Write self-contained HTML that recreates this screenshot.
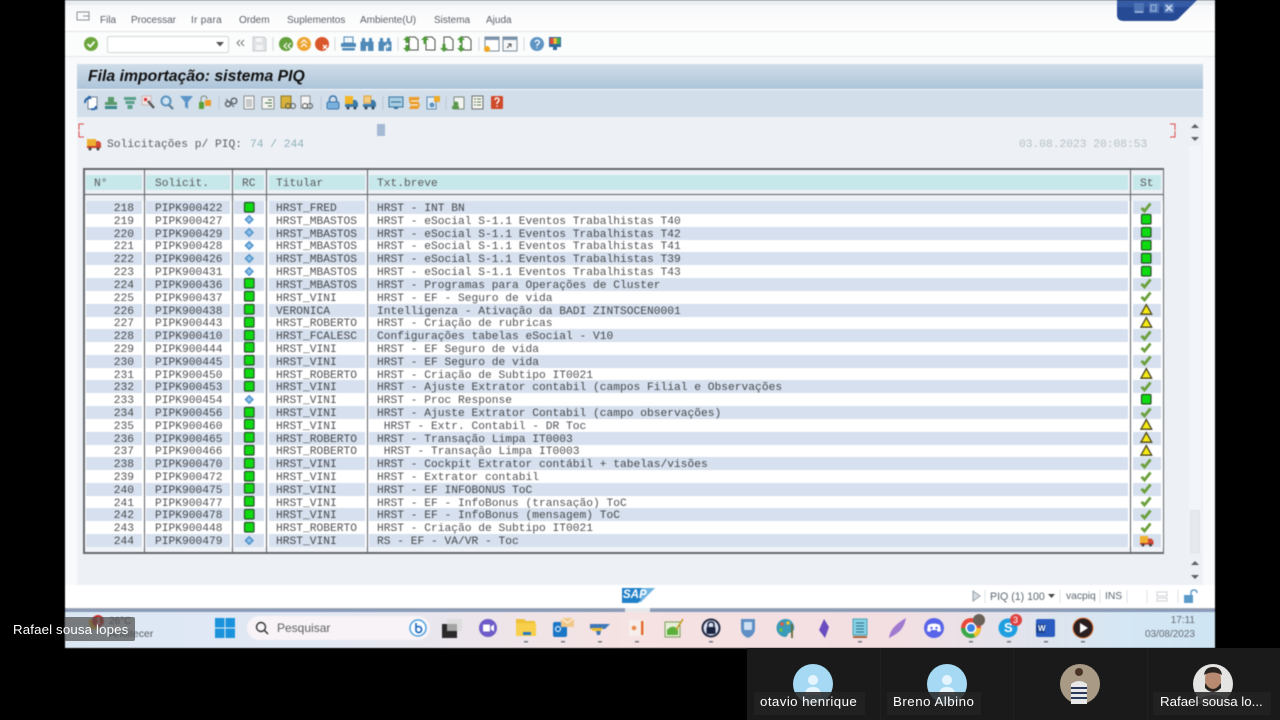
<!DOCTYPE html>
<html lang="pt"><head><meta charset="utf-8"><title>Fila importação</title>
<style>
*{box-sizing:border-box;margin:0;padding:0}
html,body{width:1280px;height:720px;overflow:hidden;background:#000}
body{font-family:"Liberation Sans",sans-serif;position:relative}
.a,.a>*{position:absolute}
#s{left:65px;top:0;width:1150px;height:648px;background:#fff;overflow:hidden}
.m{top:15px;font-size:10px;color:#5a5f66;line-height:12px;white-space:nowrap}
.mono{font-family:"Liberation Mono",monospace;font-size:11.25px;line-height:13px;white-space:pre}
.r{position:absolute;left:0;width:1280px;height:13px}
.r span{position:absolute;top:0;height:13px;font-family:"Liberation Mono",monospace;font-size:11.25px;line-height:16.5px;color:#505256;white-space:pre}
.r span:nth-child(1){left:86px;width:56px;text-align:right;padding-right:8px}
.r span:nth-child(2){left:146px;width:84px;padding-left:9px}
.r span:nth-child(3){left:234px;width:30px}
.r span:nth-child(4){left:269px;width:96px;padding-left:7px}
.r span:nth-child(5){left:369px;width:759px;padding-left:8px}
.r span:nth-child(6){left:1133px;width:28px}
.o span{background:#d6e0ee;color:#46484c}
.r svg{position:absolute;left:0;top:-.5px;width:100%;height:13px}
.h{position:absolute;top:175px;height:15px;background:#c7e8ea;font-family:"Liberation Mono",monospace;font-size:11.25px;line-height:18px;color:#55595c;white-space:pre}
.v{position:absolute;top:168px;height:385px;width:1px;background:#5c6066}
.n{position:absolute;font-size:13.3px;color:#fff;line-height:18px;white-space:nowrap;letter-spacing:.35px}
.l{position:absolute;top:692px;height:23px;background:#232323}
</style></head>
<body>
<svg width="0" height="0" style="position:absolute"><defs>
<symbol id="g" viewBox="0 0 30 13"><rect x="10.5" y="1.5" width="9.5" height="9.5" rx="1" fill="#0fdc10" stroke="#27502c" stroke-width="1.2"/></symbol>
<symbol id="d" viewBox="0 0 30 13"><path d="M15.2 2.7l3.8 3.8-3.8 3.8-3.8-3.8z" fill="#8cc0ea" stroke="#4b8fc8" stroke-width="1.4"/></symbol>
<symbol id="G" viewBox="0 0 28 13"><rect x="8.500" y="1.5" width="9.500" height="9.500" rx="1" fill="#0fdc10" stroke="#27502c" stroke-width="1.2"/></symbol>
<symbol id="c" viewBox="0 0 28 13"><path d="M8.500 6.800l3 3.200 6-7.500" fill="none" stroke="#6a9f3c" stroke-width="2.800"/></symbol>
<symbol id="w" viewBox="0 0 28 13"><path d="M13.300 1.600l5.400 9.600H7.900z" fill="#f6ea14" stroke="#4a4520" stroke-width="1.300"/></symbol>
<symbol id="t" viewBox="0 0 28 13"><rect x="7" y="2" width="8" height="7.500" fill="#f0b030"/><path d="M15 4.500h3.500l2 2.500v3H15z" fill="#d24a3a"/><rect x="7" y="9" width="13.500" height="1.600" fill="#c8402e"/><circle cx="10" cy="11" r="1.500" fill="#444"/><circle cx="17.500" cy="11" r="1.500" fill="#444"/></symbol>
</defs></svg>

<div id="w" class="a" style="left:0;top:0;width:1280px;height:720px;filter:blur(.4px)">
<div id="s"></div>
<div style="left:65px;top:0;width:1150px;height:5px;background:#e9edf2"></div>
<div style="left:65px;top:5px;width:1150px;height:27px;background:linear-gradient(#f7f8fa,#fff)"></div>
<div style="left:65px;top:31px;width:1150px;height:1px;background:#dfe3e7"></div>
<div style="left:65px;top:32px;width:1150px;height:25px;background:#fbfcfc"></div>
<div style="left:65px;top:56px;width:1150px;height:1px;background:#e4e8ec"></div>
<div style="left:65px;top:57px;width:1150px;height:528px;background:#f8f9fb"></div>
<div style="left:77px;top:64px;width:1126px;height:25px;background:linear-gradient(#d0dde9,#adc4da)"></div>
<div style="left:77px;top:90px;width:1126px;height:27px;background:#d2deea"></div>
<div style="left:77px;top:117px;width:1126px;height:468px;background:#edf1f6"></div>
<div style="left:65px;top:585px;width:1150px;height:23px;background:#fff"></div>
<div style="left:65px;top:608px;width:1150px;height:1px;background:#a6acb5"></div>
<div style="left:65px;top:609px;width:1150px;height:3px;background:#8a9bb9"></div>
<div style="left:65px;top:612px;width:1150px;height:36px;background:linear-gradient(90deg,#dbe8f4 0,#e3e9f4 22%,#f6e2e2 50%,#f3dfe2 72%,#d5e7f4 92%,#cfe5f4 100%)"></div>

<span class="m" style="left:100px">Fila</span>
<span class="m" style="left:131px">Processar</span>
<span class="m" style="left:191px;letter-spacing:.3px">Ir para</span>
<span class="m" style="left:239px">Ordem</span>
<span class="m" style="left:287px">Suplementos</span>
<span class="m" style="left:360px">Ambiente(U)</span>
<span class="m" style="left:434px">Sistema</span>
<span class="m" style="left:486px">Ajuda</span>

<div style="left:107px;top:36px;width:122px;height:17px;background:#fff;border:1px solid #d2d5d8;border-radius:2px"></div>
<span style="left:88px;top:68px;font:italic bold 15.8px/18px 'Liberation Sans',sans-serif;color:#111;white-space:nowrap">Fila importação: sistema PIQ</span>
<span class="mono" style="left:107px;top:137px;color:#5a5e62;line-height:16px">Solicitações p/ PIQ:</span>
<span class="mono" style="left:250px;top:137px;color:#8fb0ba;line-height:16px">74 / 244</span>
<span class="mono" style="left:1019px;top:137px;color:#b4bec4;line-height:16px">03.08.2023 20:08:53</span>
<div style="left:377px;top:124px;width:8px;height:12px;background:#a5b9d4"></div>

<!-- table frame -->
<div style="left:83px;top:168px;width:1081px;height:386px;background:#fff;border:1px solid #666a6e;border-width:2px 1px 2px 2px"></div>
<div style="left:85px;top:170px;width:1078px;height:24px;background:#edf1f6"></div>
<div style="left:85px;top:194px;width:1078px;height:1px;background:#5c6066"></div>
<div style="left:85px;top:195px;width:1078px;height:6px;background:#eef2f7"></div>
<div style="left:85px;top:547px;width:1078px;height:5px;background:#f0f3f8"></div>
<div class="v" style="left:144px"></div><div class="v" style="left:232px"></div><div class="v" style="left:266px"></div><div class="v" style="left:367px"></div><div class="v" style="left:1130px"></div>
<div class="h" style="left:86px;width:56px;padding-left:8px">N°</div>
<div class="h" style="left:146px;width:84px;padding-left:9px">Solicit.</div>
<div class="h" style="left:234px;width:30px;padding-left:8px">RC</div>
<div class="h" style="left:269px;width:96px;padding-left:7px">Titular</div>
<div class="h" style="left:369px;width:759px;padding-left:8px">Txt.breve</div>
<div class="h" style="left:1133px;width:28px;padding-left:7px">St</div>

<div class="r o" style="top:201px"><span>218</span><span>PIPK900422</span><span><svg><use href="#g"/></svg></span><span>HRST_FRED</span><span>HRST - INT BN</span><span><svg><use href="#c"/></svg></span></div>
<div class="r" style="top:213.8px"><span>219</span><span>PIPK900427</span><span><svg><use href="#d"/></svg></span><span>HRST_MBASTOS</span><span>HRST - eSocial S-1.1 Eventos Trabalhistas T40</span><span><svg><use href="#G"/></svg></span></div>
<div class="r o" style="top:226.6px"><span>220</span><span>PIPK900429</span><span><svg><use href="#d"/></svg></span><span>HRST_MBASTOS</span><span>HRST - eSocial S-1.1 Eventos Trabalhistas T42</span><span><svg><use href="#G"/></svg></span></div>
<div class="r" style="top:239.4px"><span>221</span><span>PIPK900428</span><span><svg><use href="#d"/></svg></span><span>HRST_MBASTOS</span><span>HRST - eSocial S-1.1 Eventos Trabalhistas T41</span><span><svg><use href="#G"/></svg></span></div>
<div class="r o" style="top:252.2px"><span>222</span><span>PIPK900426</span><span><svg><use href="#d"/></svg></span><span>HRST_MBASTOS</span><span>HRST - eSocial S-1.1 Eventos Trabalhistas T39</span><span><svg><use href="#G"/></svg></span></div>
<div class="r" style="top:265px"><span>223</span><span>PIPK900431</span><span><svg><use href="#d"/></svg></span><span>HRST_MBASTOS</span><span>HRST - eSocial S-1.1 Eventos Trabalhistas T43</span><span><svg><use href="#G"/></svg></span></div>
<div class="r o" style="top:277.9px"><span>224</span><span>PIPK900436</span><span><svg><use href="#g"/></svg></span><span>HRST_MBASTOS</span><span>HRST - Programas para Operações de Cluster</span><span><svg><use href="#c"/></svg></span></div>
<div class="r" style="top:290.7px"><span>225</span><span>PIPK900437</span><span><svg><use href="#g"/></svg></span><span>HRST_VINI</span><span>HRST - EF - Seguro de vida</span><span><svg><use href="#c"/></svg></span></div>
<div class="r o" style="top:303.5px"><span>226</span><span>PIPK900438</span><span><svg><use href="#g"/></svg></span><span>VERONICA</span><span>Intelligenza - Ativação da BADI ZINTSOCEN0001</span><span><svg><use href="#w"/></svg></span></div>
<div class="r" style="top:316.3px"><span>227</span><span>PIPK900443</span><span><svg><use href="#g"/></svg></span><span>HRST_ROBERTO</span><span>HRST - Criação de rubricas</span><span><svg><use href="#w"/></svg></span></div>
<div class="r o" style="top:329.1px"><span>228</span><span>PIPK900410</span><span><svg><use href="#g"/></svg></span><span>HRST_FCALESC</span><span>Configurações tabelas eSocial - V10</span><span><svg><use href="#c"/></svg></span></div>
<div class="r" style="top:341.9px"><span>229</span><span>PIPK900444</span><span><svg><use href="#g"/></svg></span><span>HRST_VINI</span><span>HRST - EF Seguro de vida</span><span><svg><use href="#c"/></svg></span></div>
<div class="r o" style="top:354.7px"><span>230</span><span>PIPK900445</span><span><svg><use href="#g"/></svg></span><span>HRST_VINI</span><span>HRST - EF Seguro de vida</span><span><svg><use href="#c"/></svg></span></div>
<div class="r" style="top:367.5px"><span>231</span><span>PIPK900450</span><span><svg><use href="#g"/></svg></span><span>HRST_ROBERTO</span><span>HRST - Criação de Subtipo IT0021</span><span><svg><use href="#w"/></svg></span></div>
<div class="r o" style="top:380.3px"><span>232</span><span>PIPK900453</span><span><svg><use href="#g"/></svg></span><span>HRST_VINI</span><span>HRST - Ajuste Extrator contabil (campos Filial e Observações</span><span><svg><use href="#c"/></svg></span></div>
<div class="r" style="top:393.2px"><span>233</span><span>PIPK900454</span><span><svg><use href="#d"/></svg></span><span>HRST_VINI</span><span>HRST - Proc Response</span><span><svg><use href="#G"/></svg></span></div>
<div class="r o" style="top:406px"><span>234</span><span>PIPK900456</span><span><svg><use href="#g"/></svg></span><span>HRST_VINI</span><span>HRST - Ajuste Extrator Contabil (campo observações)</span><span><svg><use href="#c"/></svg></span></div>
<div class="r" style="top:418.8px"><span>235</span><span>PIPK900460</span><span><svg><use href="#g"/></svg></span><span>HRST_VINI</span><span> HRST - Extr. Contabil - DR Toc</span><span><svg><use href="#w"/></svg></span></div>
<div class="r o" style="top:431.6px"><span>236</span><span>PIPK900465</span><span><svg><use href="#g"/></svg></span><span>HRST_ROBERTO</span><span>HRST - Transação Limpa IT0003</span><span><svg><use href="#w"/></svg></span></div>
<div class="r" style="top:444.4px"><span>237</span><span>PIPK900466</span><span><svg><use href="#g"/></svg></span><span>HRST_ROBERTO</span><span> HRST - Transação Limpa IT0003</span><span><svg><use href="#w"/></svg></span></div>
<div class="r o" style="top:457.2px"><span>238</span><span>PIPK900470</span><span><svg><use href="#g"/></svg></span><span>HRST_VINI</span><span>HRST - Cockpit Extrator contábil + tabelas/visões</span><span><svg><use href="#c"/></svg></span></div>
<div class="r" style="top:470px"><span>239</span><span>PIPK900472</span><span><svg><use href="#g"/></svg></span><span>HRST_VINI</span><span>HRST - Extrator contabil</span><span><svg><use href="#c"/></svg></span></div>
<div class="r o" style="top:482.8px"><span>240</span><span>PIPK900475</span><span><svg><use href="#g"/></svg></span><span>HRST_VINI</span><span>HRST - EF INFOBONUS ToC</span><span><svg><use href="#c"/></svg></span></div>
<div class="r" style="top:495.6px"><span>241</span><span>PIPK900477</span><span><svg><use href="#g"/></svg></span><span>HRST_VINI</span><span>HRST - EF - InfoBonus (transação) ToC</span><span><svg><use href="#c"/></svg></span></div>
<div class="r o" style="top:508.4px"><span>242</span><span>PIPK900478</span><span><svg><use href="#g"/></svg></span><span>HRST_VINI</span><span>HRST - EF - InfoBonus (mensagem) ToC</span><span><svg><use href="#c"/></svg></span></div>
<div class="r" style="top:521.2px"><span>243</span><span>PIPK900448</span><span><svg><use href="#g"/></svg></span><span>HRST_ROBERTO</span><span>HRST - Criação de Subtipo IT0021</span><span><svg><use href="#c"/></svg></span></div>
<div class="r o" style="top:534px"><span>244</span><span>PIPK900479</span><span><svg><use href="#d"/></svg></span><span>HRST_VINI</span><span>RS - EF - VA/VR - Toc</span><span><svg><use href="#t"/></svg></span></div>

<!-- scrollbar -->
<div style="left:1189px;top:146px;width:12px;height:407px;background:#f2f5f9"></div>
<div style="left:1190px;top:510px;width:10px;height:43px;background:#e6eaef;border:1px solid #e0e4e9"></div>

<!-- status text -->
<span style="left:990px;top:590px;font-size:10.6px;line-height:14px;color:#5c6670;white-space:nowrap">PIQ (1) 100</span>
<span style="left:1066px;top:590px;font-size:10.3px;line-height:14px;color:#5c6670">vacpiq</span>
<span style="left:1105px;top:590px;font-size:10.3px;line-height:14px;color:#5c6670">INS</span>

<!-- taskbar search -->
<div style="left:247px;top:616px;width:183px;height:24px;border-radius:12px;background:#f7f3f6"></div>
<span style="left:277px;top:620px;font-size:12px;line-height:16px;color:#5f6064">Pesquisar</span>
<span style="left:1142px;top:614px;width:53px;text-align:right;font-size:10px;line-height:13px;color:#666c74">17:11</span>
<span style="left:1142px;top:628px;width:53px;text-align:right;font-size:10px;line-height:13px;color:#666c74">03/08/2023</span>
<span style="left:109px;top:628px;font-size:10.5px;line-height:13px;color:#555a60">Anoitecer</span>
<span style="left:109px;top:615px;font-size:10px;line-height:13px;color:#555a60">26°C</span>

<!-- all icons -->
<svg style="left:0;top:0" width="1280" height="720" viewBox="0 0 1280 720">
<!-- menu corner -->
<path d="M77 12h12v8H77z M83 16h6" fill="none" stroke="#8a8f96" stroke-width="1"/>
<!-- window buttons -->
<path d="M1117 0h80l-17 17q-3 4-8 4h-48q-7 0-7-6z" fill="#274a94"/>
<path d="M1117 0h80l-7 7h-73z" fill="#3d62ac" opacity=".7"/>
<rect x="1134" y="3" width="10" height="10" fill="#4f74b6"/><rect x="1149" y="3" width="10" height="10" fill="#4f74b6"/><rect x="1164" y="3" width="10" height="10" fill="#4f74b6"/>
<path d="M1135 12h8" stroke="#a8c0e0" stroke-width="1.400"/><rect x="1151" y="5" width="5" height="6" fill="none" stroke="#9ab4da"/><path d="M1166 5l6 6m0-6l-6 6" stroke="#c8d8ee" stroke-width="1.800"/>
<!-- top toolbar -->
<circle cx="91" cy="44" r="7" fill="#6da63c"/><path d="M87.500 44l2.700 2.700 4.300-5" fill="none" stroke="#fff" stroke-width="1.800"/>
<path d="M216 42h8l-4 4.500z" fill="#555"/>
<path d="M240 40l-3 3 3 3m4-6l-3 3 3 3" fill="none" stroke="#777" stroke-width="1"/>
<path d="M253 37h11l2 2v12h-13z" fill="#dfe2e5" stroke="#c9cdd1"/><rect x="256" y="38" width="6" height="4" fill="#f5f6f7"/><rect x="256" y="45" width="7" height="5" fill="#f3f4f5"/>
<circle cx="286" cy="44" r="7" fill="#64a03c"/><path d="M287 43l-3 3 3 3m4-6l-3 3 3 3" fill="none" stroke="#fff" stroke-width="1.200"/>
<circle cx="304" cy="44" r="7" fill="#eda431"/><path d="M301 43l3-3 3 3m-6 4l3-3 3 3" fill="none" stroke="#fff" stroke-width="1.200"/>
<circle cx="322" cy="44" r="7" fill="#d9562a"/><path d="M323 45l4 4m0-4l-4 4" stroke="#fff" stroke-width="1.400"/>
<rect x="344" y="37" width="9" height="6" fill="#f4f8fb" stroke="#4f8ab8"/><path d="M341 43h14q1 0 1 1v3h-15v-3q0-1 1-1z" fill="#4f8ab8"/><rect x="342" y="48" width="13" height="2.500" rx="1" fill="#4f8ab8"/>
<g fill="#4f8ab8"><path d="M362 38h3v3l1 1v9h-5.500v-9l1.500-1z"/><path d="M369 38h3v3l1.500 1v9H368v-9l1-1z"/><rect x="365" y="42" width="4" height="4"/>
<path d="M380 38h3v3l1 1v9h-5.500v-9l1.500-1z"/><path d="M387 38h3v3l1.500 1v9H386v-9l1-1z"/><rect x="383" y="42" width="4" height="4"/></g>
<path d="M385 46h5m-2.500-2.500v5" stroke="#fff" stroke-width="1.200"/>
<g fill="#fff" stroke="#4a5246"><path d="M409 37h6l3 3v10h-9z"/><path d="M426 37h6l3 3v10h-9z"/><path d="M444 37h6l3 3v10h-9z"/><path d="M462 37h6l3 3v10h-9z"/></g>
<g fill="#4f9a3a"><path d="M407 36l4 4h-2.500v3h-3v-3H403z"/><path d="M407 52l4-4h-2.500v-3h-3v3H403z"/><path d="M425 36l4 4h-2.500v4h-3v-4H421z"/><path d="M444 52l4-4h-2.500v-4h-3v4H440z"/><path d="M461 36l4 4h-2.500v3h-3v-3H457z"/><path d="M461 52l4-4h-2.500v-3h-3v3H457z"/></g>
<path d="M485 37h14v14h-14z" fill="#fff" stroke="#7a8a9a"/><path d="M485 37h14v3h-14z" fill="#7a94ac"/><circle cx="487" cy="49" r="3" fill="#efa820"/>
<path d="M503 37h14v14h-14z" fill="#f6f8fa" stroke="#7a8a9a"/><path d="M503 37h14v3h-14z" fill="#7a94ac"/><path d="M507 48l4-4m-3 0h3v3" fill="none" stroke="#555"/>
<circle cx="537" cy="44" r="7" fill="#5d94c4"/><path d="M534.800 42q2-3 4.400-.8 1 1.800-2.200 3.600v1.200m0 1.200v1" fill="none" stroke="#fff" stroke-width="1.300"/>
<rect x="549" y="37" width="12" height="10" fill="#2f6b9e"/><rect x="550" y="38" width="3.300" height="6" fill="#e84a3a"/><rect x="553.500" y="38" width="3.300" height="6" fill="#f0c030"/><rect x="557" y="38" width="3" height="6" fill="#4ab04a"/><rect x="553" y="47" width="4" height="3" fill="#2f6b9e"/>
<!-- separators -->
<g stroke="#d5dae0"><path d="M273 37v14M335 37v14M398 37v14M479 37v14M524 37v14"/></g>
<g stroke="#bcc9d8"><path d="M219 96v14M321 96v14M383 96v14M446 96v14"/></g>
<!-- app toolbar -->
<rect x="88" y="97" width="9" height="12" fill="#fff" stroke="#6b7f95"/><path d="M85 103q0-5 5-5l-1-2m7 10q0 4-5 3" fill="none" stroke="#2a65a8" stroke-width="2"/>
<path d="M108 97h6v5h3v3h-12v-3h3z" fill="#5a9a6a"/><rect x="105" y="106" width="12" height="3" fill="#3a8a8a"/>
<path d="M124 97h12v3h-12zM125.500 101h9v3h-9zM127.500 105h5v4h-5z" fill="#5ba08a"/>
<rect x="142" y="96" width="9" height="9" fill="#f3e4e4" stroke="#c9b6b6"/><path d="M148 101l6 7" stroke="#555" stroke-width="2.400"/><rect x="144" y="98" width="3" height="3" fill="#d33"/>
<circle cx="166" cy="101" r="4.500" fill="#cfe2f2" stroke="#5a92be" stroke-width="2"/><path d="M169 105l4 4" stroke="#5a7a90" stroke-width="2.200"/>
<path d="M180 96h13l-5 6v7l-3-2v-5z" fill="#5a94c8"/>
<rect x="199" y="102" width="5" height="7" fill="#5aa03a"/><rect x="205" y="100" width="6" height="6" fill="#ee9a2a"/><path d="M201 102v-3q0-3 3-3t3 3" fill="none" stroke="#7a8a7a"/>
<circle cx="228" cy="104" r="2.500" fill="none" stroke="#5a5f64" stroke-width="1.400"/><circle cx="234" cy="101" r="2.800" fill="none" stroke="#5a5f64" stroke-width="1.400"/><path d="M226 99l8 8" stroke="#5a5f64"/>
<rect x="244" y="96" width="10" height="13" fill="#f4f4f2" stroke="#8a8f92"/><path d="M246 100h6m-6 2h6m-6 2h6m-6 2h6" stroke="#9aa0a4"/>
<rect x="262" y="97" width="12" height="12" fill="#f5f5f2" stroke="#8a8f92"/><path d="M268 100h4m-7 3h7m-4 3h4" stroke="#3f6a42"/>
<rect x="281" y="96" width="10" height="12" fill="#d8b23a" stroke="#8a7a30"/><circle cx="288" cy="106" r="2.500" fill="none" stroke="#555"/><circle cx="293" cy="106" r="2.500" fill="none" stroke="#555"/>
<rect x="301" y="96" width="9" height="12" fill="#f4f4f4" stroke="#8a8f92"/><circle cx="305" cy="106" r="2.500" fill="none" stroke="#555"/><circle cx="310" cy="106" r="2.500" fill="none" stroke="#555"/>
<rect x="327" y="102" width="12" height="7" rx="1.500" fill="#7ab0dc" stroke="#3c78ae"/><path d="M329.500 102v-2q0-4 3.500-4t3.500 4v2" fill="none" stroke="#3c78ae" stroke-width="1.500"/>
<rect x="345" y="96" width="8" height="8" fill="#f2b626"/><rect x="345" y="104" width="13" height="3" fill="#3c7aa8"/><path d="M353 100h3l2 3v2h-5z" fill="#3c7aa8"/><circle cx="348" cy="108" r="1.500" fill="#345"/><circle cx="355" cy="108" r="1.500" fill="#345"/>
<rect x="364" y="96" width="7" height="7" fill="#f4cc80" stroke="#e0a040"/><rect x="363" y="104" width="13" height="3" fill="#3c7aa8"/><path d="M371 100h3l2 3v2h-5z" fill="#3c7aa8"/><circle cx="366" cy="108" r="1.500" fill="#345"/><circle cx="373" cy="108" r="1.500" fill="#345"/>
<rect x="389" y="97" width="14" height="10" fill="#a8cde2" stroke="#36749e"/><rect x="394" y="107" width="4" height="2" fill="#36749e"/><path d="M391 102h10" stroke="#2f6a94"/>
<path d="M409 97h11l-2 4 2 4-2 4h-9l2-4-2-4z" fill="#ea9c2c"/><path d="M411 101h7m-7 4h7" stroke="#fff"/>
<rect x="427" y="97" width="9" height="12" fill="#e4eef6" stroke="#5a8ab0"/><rect x="434" y="96" width="6" height="6" fill="#eeaa2a"/><circle cx="432" cy="105" r="2.500" fill="#5a94c0"/>
<rect x="454" y="97" width="10" height="12" fill="#f4f5f2" stroke="#7a8a7a"/><circle cx="456" cy="104" r="2.500" fill="#5a9a4a"/><rect x="452" y="106" width="7" height="3" fill="#5a9a4a"/>
<rect x="472" y="96" width="11" height="13" fill="#f6f5ee" stroke="#6a6f72"/><path d="M474 99h2m1 0h4m-7 3h2m1 0h4m-7 3h2m1 0h4" stroke="#5a7a5a"/>
<rect x="491" y="96" width="12" height="13" rx="1" fill="#cf4a2a"/><path d="M494.800 100q1-2.500 2.400-2 2.500.5 1.500 3l-1.700 2v1m0 1.500v1.300" fill="none" stroke="#fff" stroke-width="1.400"/>
<!-- content icons -->
<path d="M79 130v-6h5M79 131v6h5" fill="none" stroke="#e04848" stroke-width="1"/>
<path d="M1170 124h5v6M1170 137h5v-6" fill="none" stroke="#e04848" stroke-width="1"/>
<rect x="87" y="139" width="9" height="7" fill="#eeb030"/><path d="M96 141h3l2 2v3h-5z" fill="#d24a3a"/><rect x="87" y="146" width="14" height="2" fill="#c8402e"/><circle cx="90" cy="149" r="1.500" fill="#444"/><circle cx="98" cy="149" r="1.500" fill="#444"/>
<g fill="#5d6268"><path d="M1191 128l4-4 4 4zM1191 137h8l-4 4zM1191 565l4-4 4 4zM1191 575h8l-4 4z"/></g>
<!-- SAP logo -->
<path d="M622 588h33l-17 15h-16z" fill="#1f7fc8"/><path d="M642 588h13l-15 15z" fill="#6fb3e2"/>
<!-- sb -->
<path d="M973 591l7 5-7 5z" fill="#d8dde3" stroke="#95a0aa"/>
<path d="M1048 594h7l-3.500 4z" fill="#444"/>
<g stroke="#dde0e4"><path d="M985 590v13M1060 590v13M1100 590v13M1127 590v13M1147 590v13M1178 590v13"/></g>
<g fill="none" stroke="#ccd0d4"><path d="M1157 592h10v4h-10zM1157 598h10v3h-10z"/></g>
<rect x="1184" y="595" width="9" height="8" fill="#5a9ac8"/><path d="M1191 595v-2q0-3 3-3t3 3" fill="none" stroke="#5a9ac8" stroke-width="1.400"/>
<!-- splitter -->
<rect x="625" y="608" width="25" height="4" fill="#e5e7ea"/>
<!-- taskbar -->
<g fill="#1b92dc"><rect x="215" y="618" width="9.500" height="9.500"/><rect x="225.500" y="618" width="9.500" height="9.500"/><rect x="215" y="628.500" width="9.500" height="9.500"/><rect x="225.500" y="628.500" width="9.500" height="9.500"/></g>
<circle cx="261" cy="627" r="4.500" fill="none" stroke="#333" stroke-width="1.400"/><path d="M264 630l4 4" stroke="#333" stroke-width="1.500"/>
<circle cx="418" cy="628" r="8" fill="#fff" stroke="#4ba0e0" stroke-width="1.500"/><path d="M416 623v8a3 3 0 1 0 1-4" fill="none" stroke="#1f6ac0" stroke-width="1.700"/>
<rect x="442" y="624" width="15" height="14" fill="#2a2a2a"/><rect x="447" y="619" width="15" height="12" fill="#d8d8d8" opacity=".7"/>
<circle cx="488" cy="628" r="9" fill="#6d5bc8"/><rect x="483" y="624.500" width="7" height="7" rx="1" fill="#fff"/><path d="M491 626.500l3-2v7l-3-2z" fill="#fff"/>
<path d="M516 619h8l2 2h9v4h-19z" fill="#eec136"/><rect x="516" y="623" width="20" height="13" fill="#f7cf4a"/><rect x="523" y="632" width="8" height="3" fill="#2a7ac0"/>
<rect x="553" y="622" width="14" height="15" rx="2" fill="#1a76c6"/><rect x="561" y="618" width="13" height="9" fill="#f1c88a"/><path d="M561 618l6.500 5 6.500-5" fill="none" stroke="#fff" stroke-width=".8"/><circle cx="558" cy="629" r="2.500" fill="none" stroke="#fff"/>
<path d="M590 624h20l-5 5h-15z" fill="#3e78b8"/><path d="M590 628h13l-2 3h-8z" fill="#eebb30"/><path d="M596 631h5l-1 4h-3z" fill="#3e78b8"/>
<rect x="629" y="620" width="16" height="16" fill="#f6eeea"/><circle cx="634" cy="628" r="2.300" fill="#ea8a4a"/><rect x="641" y="621" width="2.500" height="14" fill="#e46a30"/>
<rect x="665" y="622" width="15" height="15" fill="#e8edd8" stroke="#7aa05a"/><path d="M667 630q5-6 11-1v6h-11z" fill="#5ab03a"/><path d="M676 630l7-11" stroke="#c8a030" stroke-width="1.700"/>
<circle cx="711" cy="628" r="9.500" fill="#222b44"/><circle cx="711" cy="628" r="7.500" fill="#d9dff0"/><rect x="706.500" y="627" width="9" height="7" rx="1" fill="#1a2440"/><path d="M708 627v-2q0-3 3-3t3 3v2" fill="none" stroke="#1a2440" stroke-width="1.400"/>
<path d="M741 619h14v10q0 6-7 9-7-3-7-9z" fill="#5f8fc4"/><rect x="744" y="622" width="8" height="8" rx="1" fill="#cfe0f2"/>
<path d="M786 619a9 9 0 1 0-1 18c3 0 2-3 4-4 4-1 6-3 5-7-1-4-4-7-8-7z" fill="#3a9ab8"/><circle cx="782" cy="624" r="1.800" fill="#ea5a3a"/><circle cx="788" cy="623" r="1.800" fill="#f0c030"/><circle cx="781" cy="630" r="1.800" fill="#6ac04a"/><path d="M792 624v14" stroke="#6a6a3a" stroke-width="1.800"/>
<path d="M824 619l5 8-4 11-6-8z" fill="#6a4cc0"/>
<rect x="853" y="619" width="14" height="16" fill="#86d2e4" stroke="#4aa0b8"/><path d="M856 623h8m-8 3h8m-8 3h8m-8 3h8" stroke="#2a6a88"/><rect x="853" y="636" width="14" height="2" fill="#a0623a"/>
<path d="M889 638q1-11 17-20-2 11-10 16-3 2-7 4z" fill="#a07ad0"/>
<circle cx="934" cy="628" r="10" fill="#5865e8"/><path d="M928 625q6-3 12 0l1 6-3 1-1-2h-6l-1 2-3-1z" fill="#fff"/><circle cx="931.500" cy="628" r="1.200" fill="#5865e8"/><circle cx="936.500" cy="628" r="1.200" fill="#5865e8"/>
<circle cx="971" cy="628" r="10" fill="#e8483a"/><path d="M971 628l8.700 5A10 10 0 0 1 961 628h10z" fill="#3aa84a"/><path d="M971 628h10a10 10 0 0 1-6 9z" fill="#f4c430"/><circle cx="971" cy="628" r="4.800" fill="#3a82e4" stroke="#fff" stroke-width="1.600"/>
<circle cx="979" cy="620" r="6" fill="#6a6258"/>
<circle cx="1008" cy="628" r="9.500" fill="#1f9fe0"/><circle cx="1016" cy="620" r="6" fill="#e04040"/>
<rect x="1036" y="619" width="19" height="18" rx="2" fill="#2a5bc0"/><rect x="1036" y="624" width="9" height="9" fill="#174090"/>
<circle cx="1083" cy="628" r="10" fill="#2a2022" stroke="#e07030" stroke-width="1"/><path d="M1080 623l8 5-8 5z" fill="#fff"/>
<g fill="#707480"><rect x="524" y="641" width="4" height="1.500"/><rect x="561" y="641" width="4" height="1.500"/><rect x="598" y="641" width="4" height="1.500"/><rect x="635" y="641" width="4" height="1.500"/><rect x="709" y="641" width="4" height="1.500"/><rect x="858" y="641" width="4" height="1.500"/><rect x="969" y="641" width="4" height="1.500"/><rect x="1007" y="641" width="4" height="1.500"/><rect x="1044" y="641" width="4" height="1.500"/><rect x="1081" y="641" width="4" height="1.500"/></g>
<!-- weather -->
<path d="M88 621l6-4 6 4-3 8h-6z" fill="#e8b030"/><circle cx="98" cy="621" r="6" fill="#c82a24"/>
</svg>
<span style="left:96px;top:615px;font-size:9px;line-height:12px;color:#fff">1</span>
<span style="left:1013px;top:615px;font-size:9px;line-height:10px;color:#fff">3</span>
<span style="left:1004px;top:620px;font-weight:bold;font-size:13px;line-height:16px;color:#fff">S</span>
<span style="left:1038px;top:624px;font-weight:bold;font-size:8px;line-height:9px;color:#fff">W</span>
<span style="left:623px;top:589px;font:italic bold 11.5px/13px 'Liberation Sans',sans-serif;color:#fff">SAP</span>
</div>

<!-- Conference overlay (sharp) -->
<div style="position:absolute;left:65px;top:617px;width:70px;height:24px;background:rgba(80,80,80,.72);border-radius:0 2px 2px 0"></div>
<span class="n" style="left:13px;top:621px;letter-spacing:.13px">Rafael sousa lopes</span>
<div style="position:absolute;left:747px;top:648px;width:533px;height:72px;background:#1a1a1a"></div>
<div style="position:absolute;left:880px;top:648px;width:1px;height:72px;background:#202020"></div>
<div style="position:absolute;left:1013px;top:648px;width:1px;height:72px;background:#202020"></div>
<div style="position:absolute;left:1147px;top:648px;width:1px;height:72px;background:#202020"></div>
<svg style="position:absolute;left:747px;top:648px" width="533" height="72" viewBox="747 648 533 72">
<circle cx="813" cy="684" r="20" fill="#a6d9f4"/><circle cx="813" cy="680" r="5" fill="#e6f5fd"/><path d="M805 695q0-8 8-8t8 8z" fill="#e6f5fd"/>
<circle cx="947" cy="684" r="20" fill="#a6d9f4"/><circle cx="947" cy="680" r="5" fill="#e6f5fd"/><path d="M939 695q0-8 8-8t8 8z" fill="#e6f5fd"/>
<circle cx="1080" cy="684" r="20" fill="#a89a84"/><circle cx="1079" cy="672" r="4" fill="#4a3428"/><path d="M1071 704v-20q8-6 16 0v20z" fill="#e8e8e8"/><path d="M1071 688h16m-16 5h16m-16 5h16" stroke="#2a3a5a" stroke-width="2"/>
<circle cx="1213" cy="684" r="20" fill="#e4e4e2"/><path d="M1205 680q0-11 8-11t8 11q0 9-8 11-8-2-8-11z" fill="#b88a70"/><path d="M1205 683q8 12 16 0v5q-8 8-16 0z" fill="#2a2420"/><path d="M1204 675q1-8 9-8t9 8q-9-5-18 0z" fill="#2a2420"/><path d="M1197 704q3-9 16-9t16 9z" fill="#8a8a8a"/>
</svg>
<div class="l" style="left:754px;width:111px;background:rgba(35,35,35,.85)"></div>
<div class="l" style="left:887px;width:94px;background:rgba(35,35,35,.85)"></div>
<div class="l" style="left:1153px;width:118px;background:rgba(35,35,35,.85)"></div>
<span class="n" style="left:760px;top:693px;letter-spacing:.42px">otavio henrique</span>
<span class="n" style="left:893px;top:693px;letter-spacing:.5px">Breno Albino</span>
<span class="n" style="left:1160px;top:693px;letter-spacing:0">Rafael sousa lo...</span>
</body></html>
